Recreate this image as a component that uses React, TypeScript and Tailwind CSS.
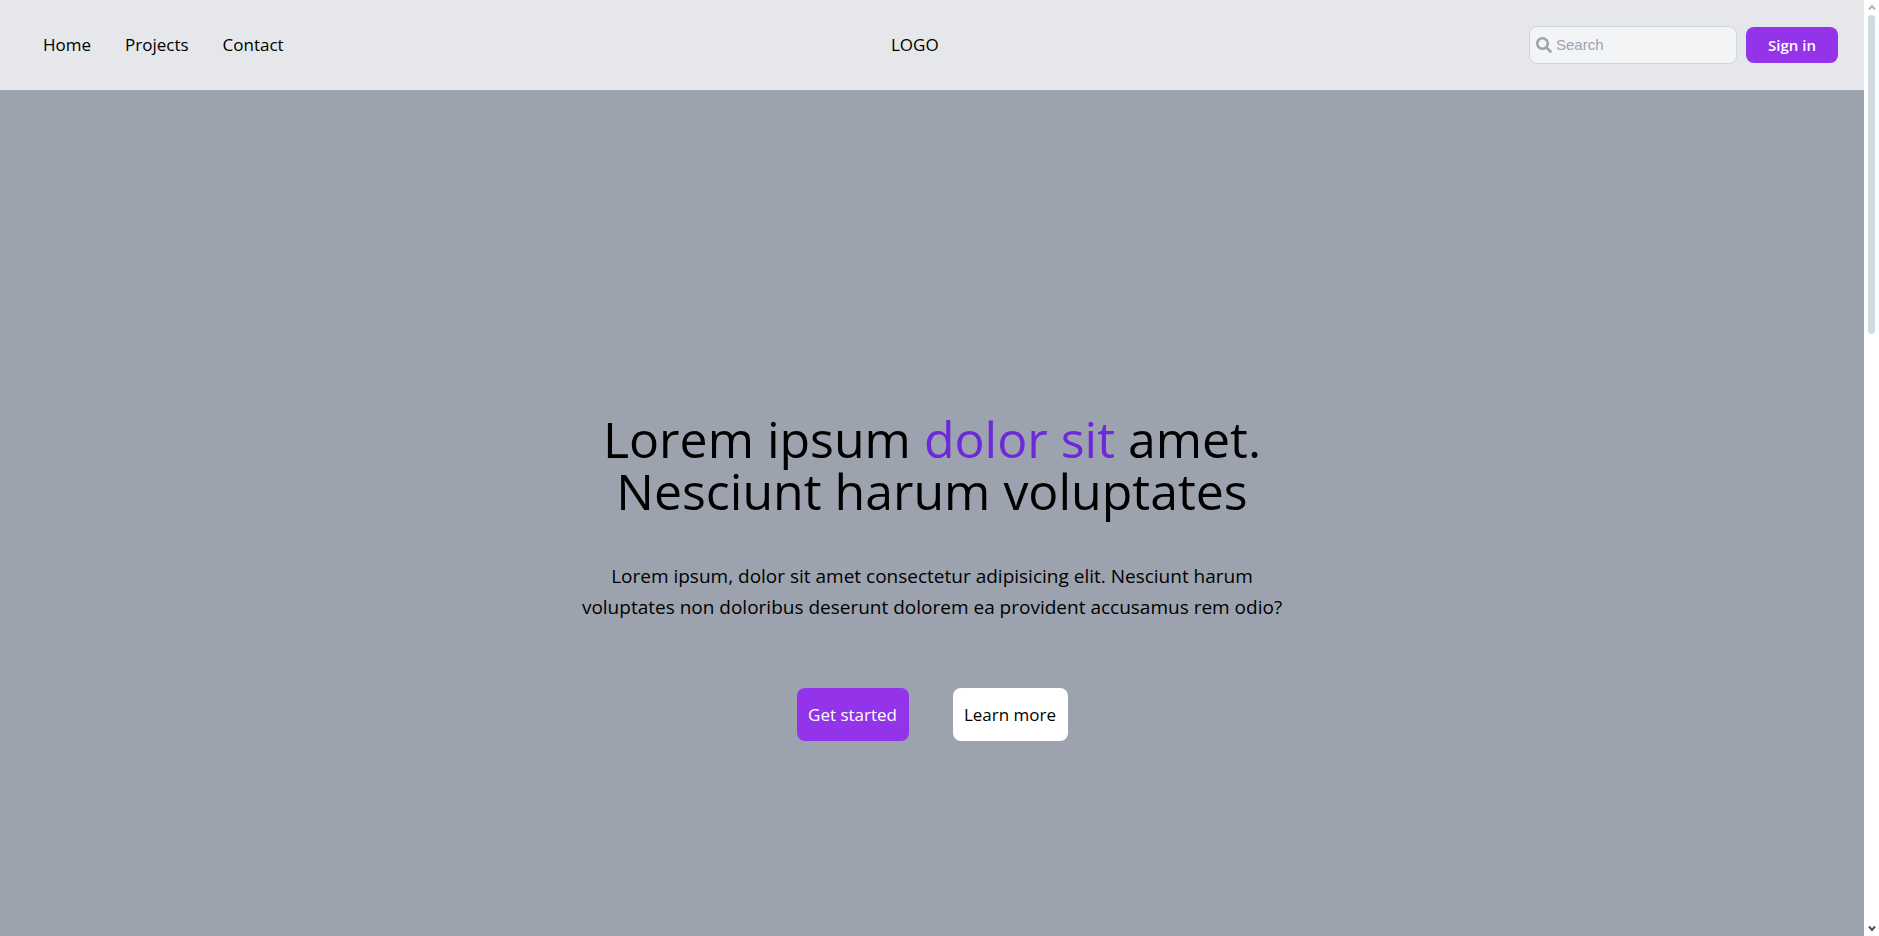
import { FaSearch } from "react-icons/fa";

const links = ["Home", "Projects", "Contact"];

function Header() {
  return (
    <header className="flex h-[90px] shrink-0 items-center justify-between bg-[#e5e7eb] px-[26px]">
      <nav className="flex text-[17px] leading-7">
        {links.map((label) => (
          <a key={label} href="#" className="px-[17px]">
            {label}
          </a>
        ))}
      </nav>
      <a href="#" className="text-[17px] leading-7">
        LOGO
      </a>
      <div className="flex items-center gap-[9px]">
        <label className="flex h-[38px] w-[208px] items-center gap-1 rounded-lg border border-[#d1d5db] bg-[#f3f4f6] px-1.5 text-[#9ca3af]">
          <FaSearch className="size-4 shrink-0" aria-hidden="true" />
          <input
            type="search"
            aria-label="Search"
            placeholder="Search"
            className="w-full min-w-0 bg-transparent font-['Liberation_Sans',sans-serif] text-[15px] font-normal text-black outline-none placeholder:text-[#9ca3af]"
          />
        </label>
        <button type="button" className="h-9 w-[92px] rounded-lg bg-[#9333ea] text-[15px] font-semibold text-white">
          Sign in
        </button>
      </div>
    </header>
  );
}

function Hero() {
  return (
    <main className="flex grow flex-col items-center bg-[#9ca3af] pt-[323px] text-center">
      <h1 className="text-[50px] leading-[52px]">
        Lorem ipsum <span className="text-[#6d28d9]">dolor sit</span> amet.
        <br />
        Nesciunt harum voluptates
      </h1>
      <p className="mt-11 text-[19px] leading-[31px]">
        Lorem ipsum, dolor sit amet consectetur adipisicing elit. Nesciunt harum
        <br />
        voluptates non doloribus deserunt dolorem ea provident accusamus rem odio?
      </p>
      <div className="mt-[65px] flex gap-11 text-[17px]">
        <button type="button" className="h-[53px] w-28 rounded-lg bg-[#9333ea] text-white">
          Get started
        </button>
        <button type="button" className="h-[53px] w-[115px] rounded-lg bg-white">
          Learn more
        </button>
      </div>
    </main>
  );
}

function ScrollTrack() {
  return (
    <div aria-hidden="true" className="flex w-[15px] shrink-0 flex-col items-center bg-white pt-1 pb-1">
      <svg viewBox="0 0 8 7" className="h-[7px] w-2" fill="none" stroke="#b5b5b5" strokeWidth="2">
        <path d="M1 5.5 4 2l3 3.5" />
      </svg>
      <div className="mt-1 h-[319px] w-[7px] rounded-sm bg-[#cfdae3]" />
      <svg viewBox="0 0 8 7" className="mt-auto h-[7px] w-2" fill="none" stroke="#505050" strokeWidth="2">
        <path d="M1 1.5 4 5l3-3.5" />
      </svg>
    </div>
  );
}

export default function App() {
  return (
    <div className="flex min-h-screen font-['Open_Sans','Noto_Sans',sans-serif] font-normal text-black">
      <div className="flex min-w-0 grow flex-col">
        <Header />
        <Hero />
      </div>
      <ScrollTrack />
    </div>
  );
}
